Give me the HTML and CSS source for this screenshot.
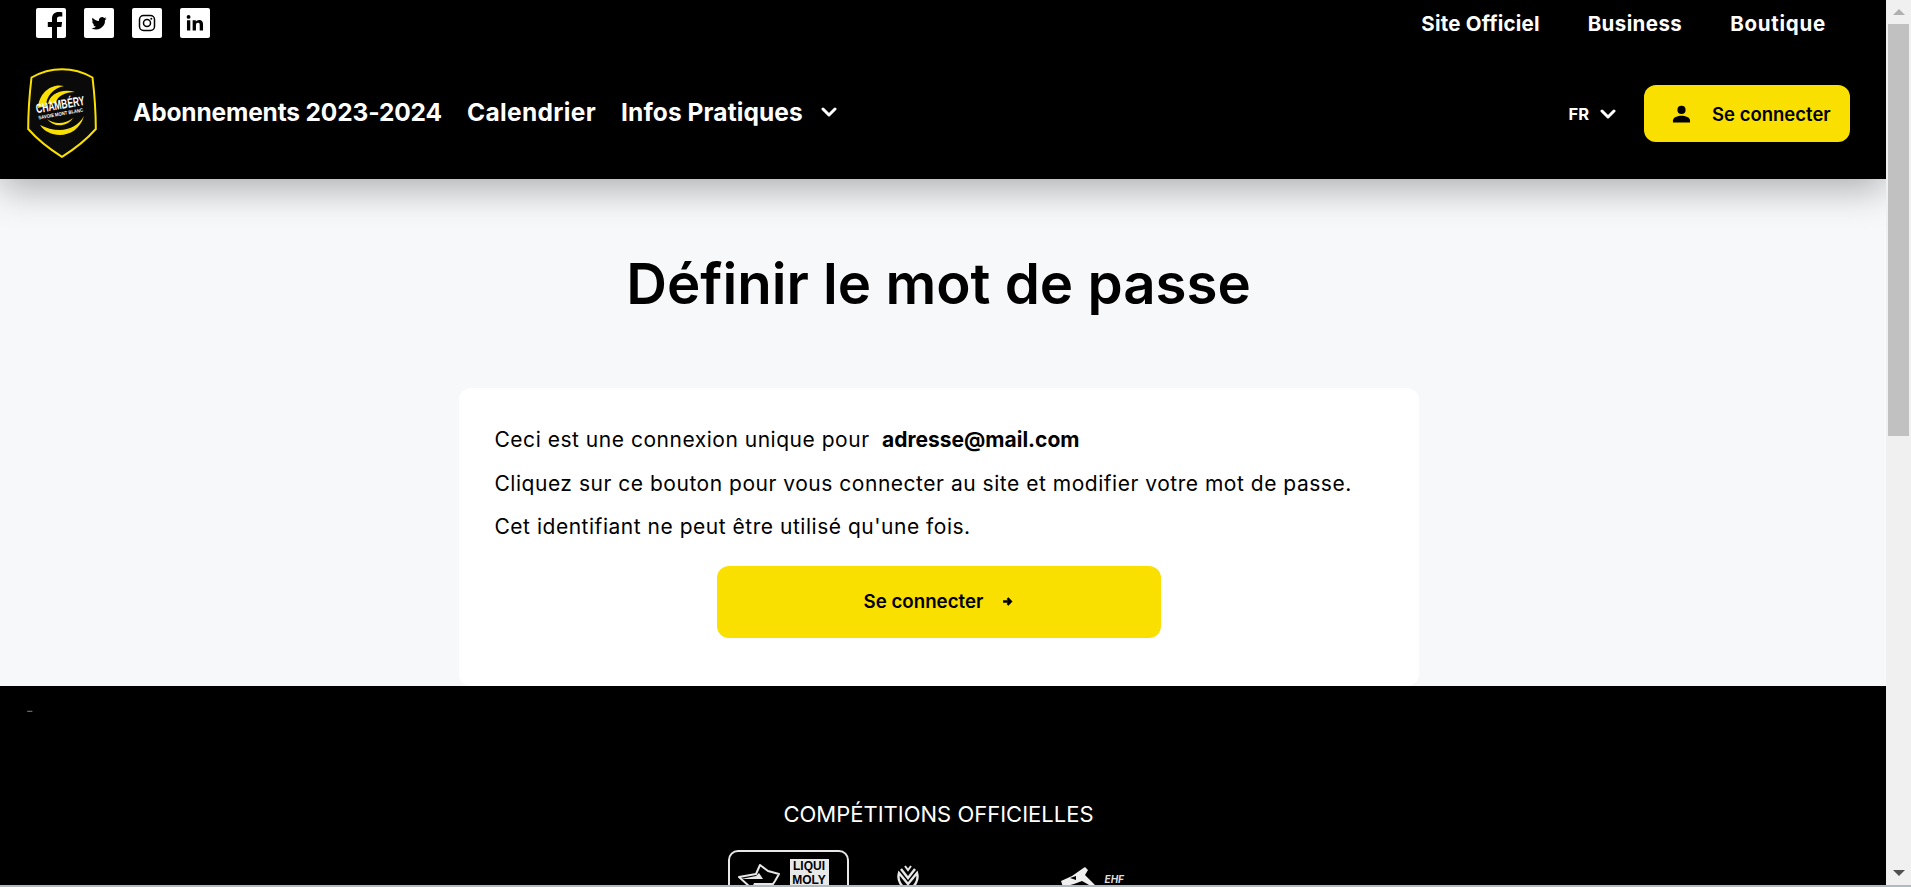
FILE: index.html
```html
<!DOCTYPE html>
<html lang="fr">
<head>
<meta charset="utf-8">
<title>Définir le mot de passe</title>
<link rel="stylesheet" href="styles.css">
</head>
<body>
<div class="window">
  <div class="page">
    <header class="header">
      <div class="topbar">
        <div class="socials">
          <a class="social"><svg viewBox="-4 -2 30 30" class="social-icon"><path d="M17 30V17h4.400l.7-5H17V9c0-1.500.5-2.500 2.500-2.500H22.300V2.200C21.800 2.100 20.200 2 18.500 2 14.700 2 12 4.300 12 8.500V12H7.800v5H12v13z" fill="#000"/></svg></a>
          <a class="social"><svg viewBox="-6 -6 36 36" class="social-icon"><path d="M21 6.600c-.7.300-1.400.5-2.100.6.800-.5 1.300-1.200 1.600-2-.7.400-1.500.7-2.300.9a3.700 3.700 0 0 0-6.300 3.400C8.800 9.300 6.100 7.900 4.300 5.600c-1 1.700-.5 3.800 1.100 4.900-.6 0-1.200-.2-1.700-.5 0 1.800 1.300 3.300 3 3.700-.5.100-1.100.2-1.700.1.500 1.500 1.900 2.500 3.500 2.600A7.500 7.500 0 0 1 3 17.900 10.500 10.500 0 0 0 19.200 8.500c.7-.5 1.300-1.100 1.800-1.900z" fill="#000"/></svg></a>
          <a class="social"><svg viewBox="-3 -3 30 30" class="social-icon"><rect x="4.500" y="4.500" width="15" height="15" rx="4" fill="none" stroke="#000" stroke-width="1.500"/><circle cx="12" cy="12" r="3.500" fill="none" stroke="#000" stroke-width="1.500"/><circle cx="16.300" cy="7.700" r="1" fill="#000"/></svg></a>
          <a class="social"><svg viewBox="-2 -2 28 28" class="social-icon"><path d="M4.500 9.500h3.100V19H4.500zM6 4.500a1.800 1.800 0 1 1 0 3.600 1.800 1.800 0 0 1 0-3.600zM9.800 9.500h3v1.300c.5-.9 1.600-1.600 3-1.600 3 0 3.700 2 3.700 4.500V19h-3.100v-4.700c0-1.200 0-2.500-1.600-2.500s-1.900 1.200-1.900 2.400V19H9.800z" fill="#000"/></svg></a>
        </div>
        <nav class="toplinks">
          <a class="toplink toplink-tight">Site Officiel</a>
          <a class="toplink">Business</a>
          <a class="toplink toplink-wide">Boutique</a>
        </nav>
      </div>
      <div class="mainbar">
        <div class="brand-nav">
          <svg class="logo" viewBox="0 0 70 90">
            <path d="M35 1.200C45 1.200 56 4 65.500 9.500 67 22 68.800 40 68.800 61 60 71 46 82 35 88.800 24 82 10 71 1.200 61 1.200 40 3 22 4.500 9.500 14 4 25 1.200 35 1.200z" fill="#0a0a0a" stroke="#fae000" stroke-width="2"/>
            <path d="M11 40C12 25 24 15 37 18 27 20 19 28 19 38zM21 36C22 27 34 20 48 24 38 24 30 28 29 35zM13 57C22 71 50 72 57 48 52 57 42 62 33 62 26 62 19 60 13 57zM20 51C28 57 38 56 46 50 40 59 27 60 20 51z" fill="#fae000"/>
            <text x="34" y="41" class="logo-title" transform="rotate(-10 34 41)" text-anchor="middle" textLength="49" lengthAdjust="spacingAndGlyphs">CHAMBÉRY</text>
            <text x="34" y="47.500" class="logo-sub" transform="rotate(-10 34 47.500)" text-anchor="middle" textLength="45" lengthAdjust="spacingAndGlyphs">SAVOIE MONT BLANC</text>
          </svg>
          <nav class="mainnav">
            <a class="mainlink mainlink-tight">Abonnements 2023-2024</a>
            <a class="mainlink mainlink-wide">Calendrier</a>
            <a class="mainlink mainlink-menu">Infos Pratiques
              <svg class="chevron" viewBox="0 0 16 10"><path d="M2 2l6 6 6-6" fill="none" stroke="#fff" stroke-width="3" stroke-linecap="round" stroke-linejoin="round"/></svg>
            </a>
          </nav>
        </div>
        <div class="actions">
          <a class="lang">FR
            <svg class="chevron" viewBox="0 0 16 10"><path d="M2 2l6 6 6-6" fill="none" stroke="#fff" stroke-width="3" stroke-linecap="round" stroke-linejoin="round"/></svg>
          </a>
          <a class="login">
            <svg class="login-icon" viewBox="0 0 20 18"><circle cx="10" cy="4.700" r="4.300" fill="#000"/><path d="M1 18v-2.200C1 12.500 6 10.800 10 10.800s9 1.700 9 5V18z" fill="#000"/></svg>
            Se connecter
          </a>
        </div>
      </div>
    </header>
    <main class="content">
      <h1 class="title">Définir le mot de passe</h1>
      <section class="card">
        <p class="line">Ceci est une connexion unique pour <strong class="email">adresse@mail.com</strong></p>
        <p class="line">Cliquez sur ce bouton pour vous connecter au site et modifier votre mot de passe.</p>
        <p class="line">Cet identifiant ne peut être utilisé qu'une fois.</p>
        <div class="cta-row">
          <a class="cta">Se connecter
            <svg class="cta-arrow" viewBox="0 0 10 10"><path d="M1 5h6.500M5 2l3 3-3 3" fill="none" stroke="#000" stroke-width="2.200"/></svg>
          </a>
        </div>
      </section>
    </main>
    <footer class="footer">
      <div class="dash">-</div>
      <h2 class="footer-title">COMPÉTITIONS OFFICIELLES</h2>
      <div class="partners">
        <div class="partner-lnh">
          <svg class="lnh-bird" viewBox="0 0 42 30"><path d="M1 13l17-3L22 1l8 6 11 3-4 7-4 6H12z" fill="#000" stroke="#e8e8e8" stroke-width="2" stroke-linejoin="round"/><path d="M3 15h22l-4-6-3 3zM16 19h20l-5 5H14z" fill="#e8e8e8"/></svg>
          <div class="lnh-mark">LIQUI<br>MOLY</div>
        </div>
        <svg class="partner-cup" viewBox="0 0 24 26"><path d="M12 25C5 22 1 15 3 8l9 11 9-11c2 7-2 14-9 17zM5 4l7 9 7-9" fill="none" stroke="#e8e8e8" stroke-width="2.400"/><path d="M9 1l3 4 3-4" fill="none" stroke="#e8e8e8" stroke-width="2"/></svg>
        <div class="partner-ehf">
          <svg class="ehf-mark" viewBox="0 0 42 24"><path d="M1 15l11-5L22 3l3-2 3 3-3 5 11 11 5 2-3 2-16-9-8 3-11 3z" fill="#f0f0f0"/><path d="M10 12l6-2v4z" fill="#000"/></svg>
          <span class="ehf-text">EHF</span>
        </div>
      </div>
    </footer>
  </div>
  <div class="scrollbar">
    <span class="arrow-up"></span>
    <div class="thumb"></div>
    <span class="arrow-down"></span>
  </div>
</div>
<div class="bottom-strip"></div>
</body>
</html>
```
FILE: styles.css
```css
* { box-sizing: border-box; }
html, body { margin: 0; height: 100%; overflow: hidden; }
body { font-family: Inter, "Liberation Sans", sans-serif; color: #000; background: #f6f8fa; }
a { color: inherit; text-decoration: none; }
.window { display: flex; height: 885px; }
.page { width: 1886px; height: 885px; display: flex; flex-direction: column; overflow: hidden; }
.header { height: 179px; background: #000; color: #fff; box-shadow: 0 10px 35px rgba(0,0,0,.3); position: relative; flex: none; display: flex; flex-direction: column; }
.topbar { height: 47px; display: flex; justify-content: space-between; padding: 8px 60px 0 36px; }
.socials { display: flex; gap: 18px; }
.social { width: 30px; height: 30px; background: #fff; border-radius: 2px; display: block; overflow: hidden; }
.social-icon { width: 30px; height: 30px; display: block; }
.toplinks { display: flex; gap: 48px; height: 30px; align-items: center; }
.toplink { font-size: 20.500px; font-weight: 700; letter-spacing: .4px; }
.toplink-tight { letter-spacing: .2px; }
.toplink-wide { letter-spacing: .75px; }
.mainbar { flex: 1; display: flex; justify-content: space-between; align-items: center; padding: 0 36px 3px 27px; }
.brand-nav { display: flex; align-items: center; }
.logo { width: 70px; height: 90px; display: block; margin-right: 36px; margin-top: 3px; }
.logo-title { font-family: "Liberation Sans", sans-serif; font-size: 13px; font-weight: 700; fill: #fff; }
.logo-sub { font-family: "Liberation Sans", sans-serif; font-size: 5px; font-weight: 700; fill: #fff; }
.mainnav { display: flex; gap: 25px; align-items: center; }
.mainlink { font-size: 24.500px; font-weight: 700; letter-spacing: .1px; }
.mainlink-tight { letter-spacing: -.15px; }
.mainlink-wide { letter-spacing: .35px; }
.mainlink-menu { display: flex; align-items: center; gap: 18px; }
.chevron { width: 16px; height: 10px; display: block; }
.actions { display: flex; align-items: center; gap: 28px; margin-top: 4px; }
.lang { display: flex; align-items: center; gap: 11px; font-size: 16.500px; font-weight: 700; }
.login { width: 206px; height: 57px; background: #fae000; color: #000; border-radius: 12px; display: flex; align-items: center; padding-left: 28px; gap: 21px; font-size: 18.500px; font-weight: 600; }
.login-icon { width: 19px; height: 18px; display: block; }
.content { flex: 1; display: flex; flex-direction: column; align-items: center; min-height: 0; padding-right: 9px; }
.title { margin: 72px 0 0; font-size: 56.400px; line-height: 66px; font-weight: 600; height: 137px; }
.card { width: 960px; height: 298px; flex: none; background: #fff; border-radius: 12px; padding: 30px 35px 0 36px; }
.line { margin: 0; font-size: 21px; line-height: 43.500px; letter-spacing: .52px; }
.email { font-weight: 700; font-size: 21px; letter-spacing: 0; margin-left: 6px; }
.cta-row { display: flex; justify-content: center; padding-top: 17px; margin-left: -1px; }
.cta { width: 444px; height: 72px; background: #fae000; border-radius: 12px; display: flex; align-items: center; justify-content: center; gap: 19px; font-size: 18.700px; font-weight: 600; }
.cta-arrow { width: 11px; height: 11px; display: block; }
.footer { height: 199px; flex: none; background: #000; color: #fff; position: relative; display: flex; flex-direction: column; align-items: center; overflow: hidden; padding-right: 9px; }
.dash { position: absolute; left: 26px; top: 14px; font-size: 16px; line-height: 20px; color: #666; }
.footer-title { margin: 114px 0 0; font-size: 22px; line-height: 28px; font-weight: 400; }
.partners { display: flex; width: 392px; margin: 22px 30px 0 0; align-items: flex-start; }
.partner-lnh { width: 121px; height: 70px; border: 2px solid #e8e8e8; border-radius: 10px; display: flex; gap: 10px; padding: 7px 0 0 8px; flex: none; }
.lnh-bird { width: 42px; height: 30px; margin-top: 5px; display: block; flex: none; }
.lnh-mark { font-family: "Liberation Sans", sans-serif; font-weight: 700; font-size: 12px; line-height: 14px; background: #e8e8e8; color: #000; padding: 0 2px; height: 30px; width: 39px; text-align: center; }
.partner-cup { width: 24px; height: 26px; margin: 15px 0 0 47px; display: block; flex: none; }
.partner-ehf { display: flex; width: 60px; margin: 16px 0 0 140px; gap: 3px; flex: none; }
.ehf-mark { width: 42px; height: 24px; display: block; flex: none; }
.ehf-text { font-size: 10px; line-height: 10px; font-weight: 700; font-style: italic; margin-top: 8px; color: #ddd; }
.scrollbar { width: 25px; height: 885px; background: #f0f0f0; position: relative; padding: 24px 2px 0; }
.thumb { height: 412px; background: #c1c1c1; }
.arrow-up { position: absolute; left: 7px; top: 9px; border-left: 6px solid transparent; border-right: 6px solid transparent; border-bottom: 6px solid #b0b0b0; }
.arrow-down { position: absolute; left: 7px; bottom: 9px; border-left: 6px solid transparent; border-right: 6px solid transparent; border-top: 6px solid #505050; }
.bottom-strip { height: 2px; background: #aebcc0; }
```
